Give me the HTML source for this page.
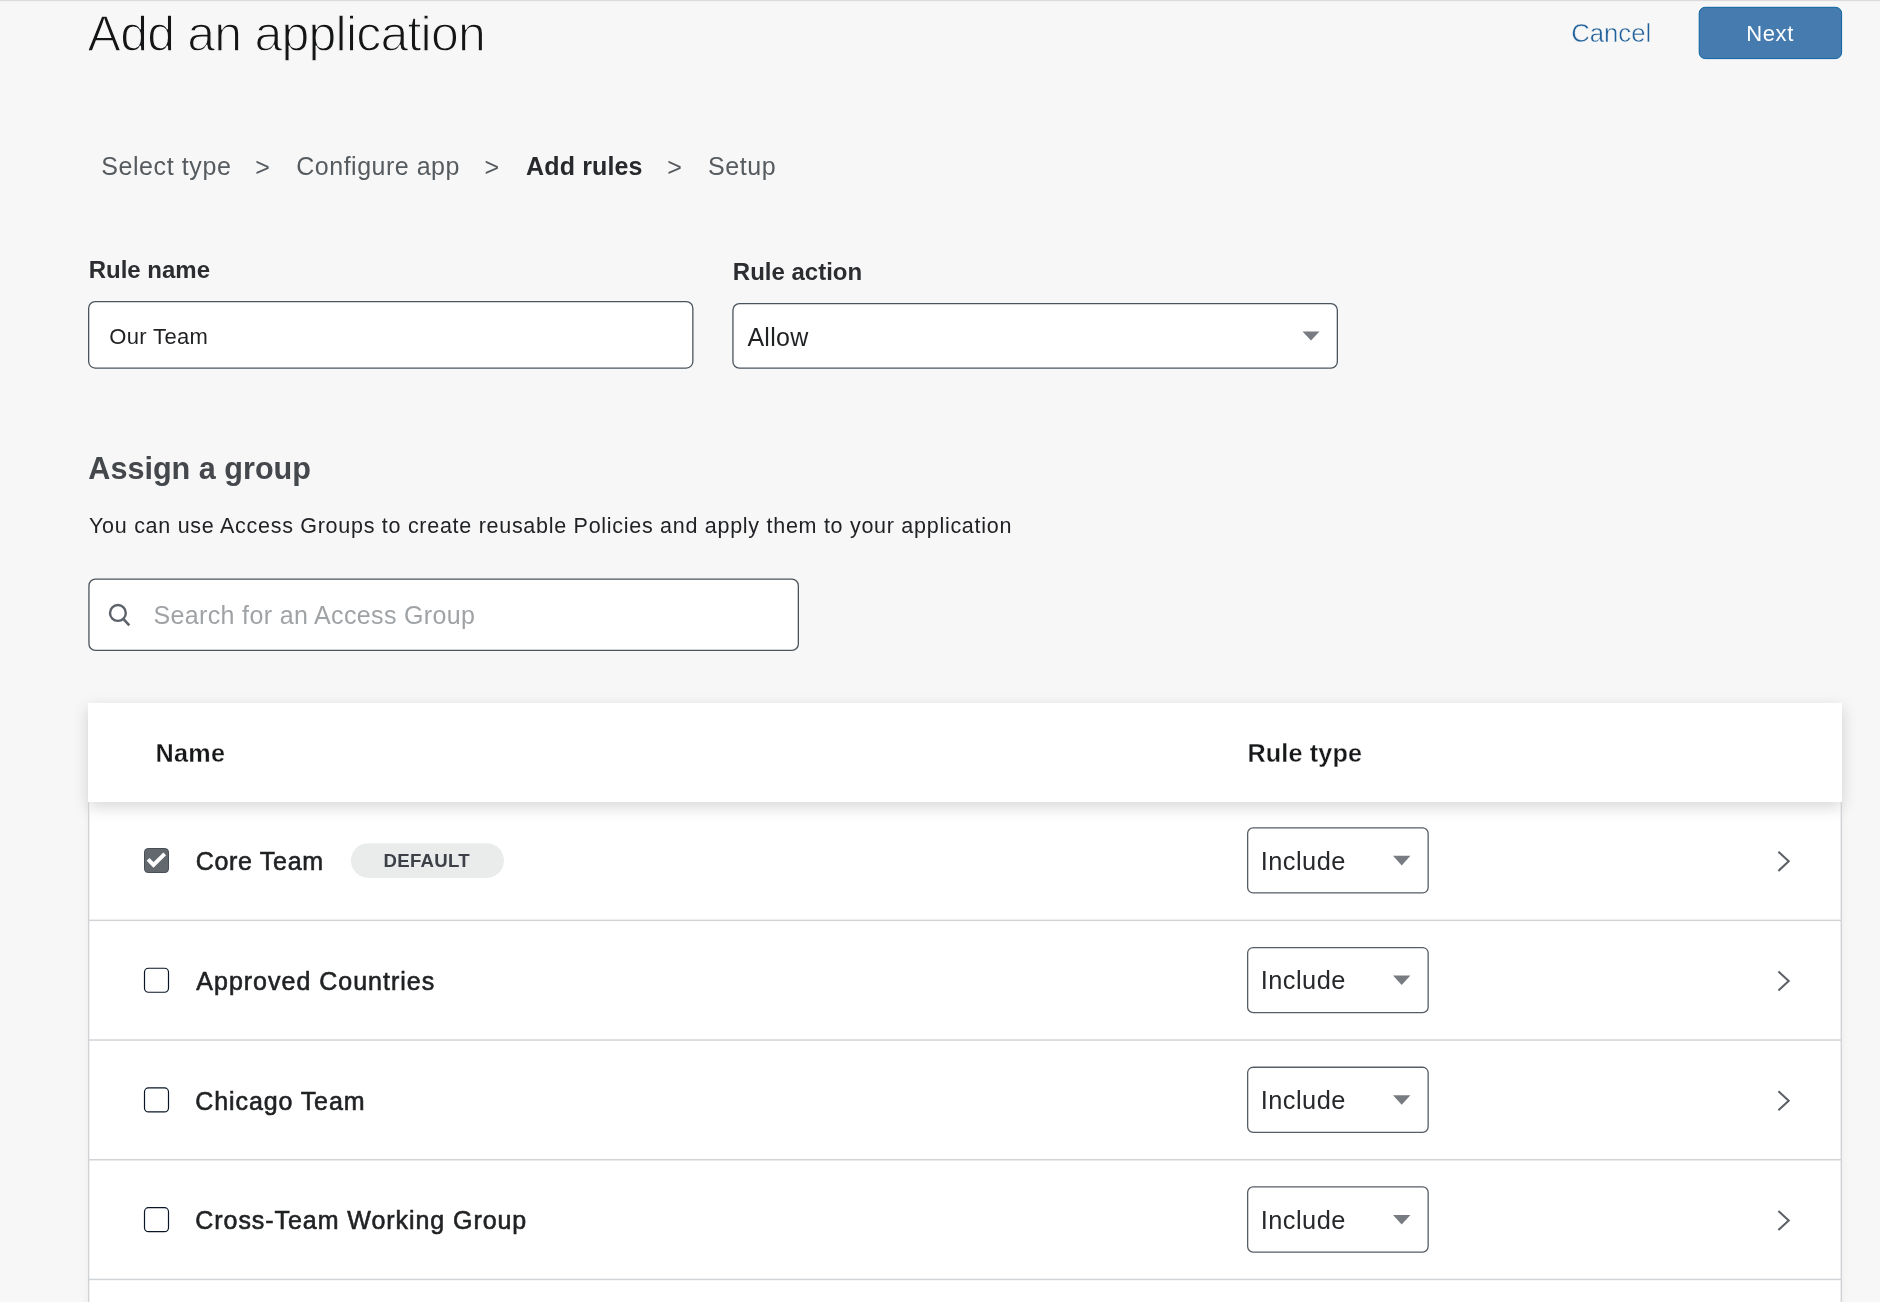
<!DOCTYPE html>
<html lang="en">
<head>
<meta charset="utf-8">
<title>Add an application</title>
<style>
*{box-sizing:border-box;margin:0;padding:0}
html,body{width:1880px;height:1302px;overflow:hidden;background:#f7f7f7}
body{font-family:"Liberation Sans",sans-serif;color:#222;position:relative}
svg.layer{position:absolute;left:0;top:0;width:1880px;height:1302px;display:block}
.txt{position:absolute;left:0;top:0;width:1880px;height:1302px;will-change:transform}
.t{position:absolute;white-space:nowrap;line-height:1;font-weight:normal}
.b{font-weight:bold}
h1.t{font-size:50px;left:87.6px;top:8.6px;color:#141516;-webkit-text-stroke:1.3px #f7f7f7;letter-spacing:-.78px}
.cancel{left:1571.2px;top:21px;font-size:25.7px;color:#20609a;-webkit-text-stroke:.5px #f7f7f7}
.next{left:1746.2px;top:22.6px;font-size:22px;color:#fff;letter-spacing:.65px}
.crumb{font-size:25px;color:#565b60;top:154px}
.crumb.b{color:#27292c}
.lbl{font-size:24px;color:#2b2d30}
h2.t{font-size:30.6px;left:88.3px;top:452.5px;color:#44484c}
.desc{left:89px;top:516px;font-size:21.5px;color:#202225}
.ph{color:#a0a3a6}
.thead{position:absolute;left:88px;top:702.8px;width:1754px;height:99.2px;background:#fff;box-shadow:0 5px 15px rgba(0,0,0,.16)}
.tbody{position:absolute;left:88px;top:802px;width:1754px;height:520px;background:#fff;box-shadow:0 0 8px rgba(0,0,0,.05)}
.th{font-size:25.2px;color:#17181a;top:741px;-webkit-text-stroke:.28px #fff}
.name{font-size:25px;color:#1f2123;-webkit-text-stroke:.6px #1f2123}
.inc{font-size:25.4px;color:#26282b;letter-spacing:.45px}
.badge{left:383.5px;top:851.5px;font-size:18.6px;color:#3d4147;letter-spacing:.3px}
</style>
</head>
<body>
<div class="tbody"></div>
<div class="thead"></div>
<svg class="layer" viewBox="0 0 1880 1302">
<rect x="0" y="0" width="1880" height="1" fill="#dbdbdd"/><rect x="0" y="1" width="1880" height="1" fill="#f3f3f4"/>
<rect x="1699.2" y="7.3" width="142.4" height="51.3" rx="6" fill="#457bae" stroke="#0a63a1" stroke-width="1"/>
<rect x="88.65" y="301.65" width="604.20" height="66.40" rx="6.5" fill="#fff" stroke="#4b545c" stroke-width="1.3"/>
<rect x="732.95" y="303.65" width="604.40" height="64.50" rx="6.5" fill="#fff" stroke="#4b545c" stroke-width="1.3"/>
<rect x="88.95" y="579.15" width="709.40" height="71.30" rx="6.5" fill="#fff" stroke="#4b545c" stroke-width="1.3"/>
<path d="M1302.50 331.50h17.00l-8.50 9.00z" fill="#787c82"/>
<circle cx="117.9" cy="612.95" r="7.9" fill="none" stroke="#5c6269" stroke-width="2.4"/><path d="M123.3 618.8L129.3 625.3" stroke="#5c6269" stroke-width="2.6"/>
<rect x="88" y="802" width="1.3" height="500" fill="#d0d2d5"/>
<rect x="1840.6" y="802" width="1.4" height="500" fill="#d0d2d5"/>
<rect x="88" y="919.60" width="1754" height="1.5" fill="#d1d4d7"/>
<rect x="88" y="1039.30" width="1754" height="1.5" fill="#d1d4d7"/>
<rect x="88" y="1159.00" width="1754" height="1.5" fill="#d1d4d7"/>
<rect x="88" y="1278.70" width="1754" height="1.5" fill="#d1d4d7"/>
<rect x="144.5" y="848.50" width="24" height="24" rx="3.6" fill="#63686d" stroke="#484e55" stroke-width="1"/>
<path d="M148.1 859.30L153.5 864.90L164.7 853.80" fill="none" stroke="#fff" stroke-width="3.9"/>
<rect x="1247.65" y="827.85" width="180.50" height="65.10" rx="5.5" fill="#fff" stroke="#565d64" stroke-width="1.3"/>
<path d="M1393.00 855.80h17.40l-8.70 9.60z" fill="#787c82"/>
<path d="M1778.4 851.80L1788.7 861.30L1778.4 870.90" fill="none" stroke="#5c6066" stroke-width="2.05"/>
<rect x="144.5" y="968.25" width="24" height="24" rx="4" fill="#fff" stroke="#0a1626" stroke-width="1.2"/>
<rect x="1247.65" y="947.55" width="180.50" height="65.10" rx="5.5" fill="#fff" stroke="#565d64" stroke-width="1.3"/>
<path d="M1393.00 975.50h17.40l-8.70 9.60z" fill="#787c82"/>
<path d="M1778.4 971.50L1788.7 981.00L1778.4 990.60" fill="none" stroke="#5c6066" stroke-width="2.05"/>
<rect x="144.5" y="1087.95" width="24" height="24" rx="4" fill="#fff" stroke="#0a1626" stroke-width="1.2"/>
<rect x="1247.65" y="1067.25" width="180.50" height="65.10" rx="5.5" fill="#fff" stroke="#565d64" stroke-width="1.3"/>
<path d="M1393.00 1095.20h17.40l-8.70 9.60z" fill="#787c82"/>
<path d="M1778.4 1091.20L1788.7 1100.70L1778.4 1110.30" fill="none" stroke="#5c6066" stroke-width="2.05"/>
<rect x="144.5" y="1207.65" width="24" height="24" rx="4" fill="#fff" stroke="#0a1626" stroke-width="1.2"/>
<rect x="1247.65" y="1186.95" width="180.50" height="65.10" rx="5.5" fill="#fff" stroke="#565d64" stroke-width="1.3"/>
<path d="M1393.00 1214.90h17.40l-8.70 9.60z" fill="#787c82"/>
<path d="M1778.4 1210.90L1788.7 1220.40L1778.4 1230.00" fill="none" stroke="#5c6066" stroke-width="2.05"/>
<rect x="350.9" y="843.2" width="153.1" height="34.7" rx="17.35" fill="#eaecec"/>
</svg>
<div class="txt">
<h1 class="t">Add an application</h1>
<span class="t cancel">Cancel</span>
<span class="t next">Next</span>

<span class="t crumb" style="left:101.2px;letter-spacing:.6px">Select type</span>
<span class="t crumb" style="left:255.3px;top:155.2px">&gt;</span>
<span class="t crumb" style="left:296.3px;letter-spacing:.5px">Configure app</span>
<span class="t crumb" style="left:484.5px;top:155.2px">&gt;</span>
<span class="t crumb b" style="left:526px;letter-spacing:.15px">Add rules</span>
<span class="t crumb" style="left:667.3px;top:155.2px">&gt;</span>
<span class="t crumb" style="left:708px;letter-spacing:.6px">Setup</span>

<span class="t lbl b" style="left:88.7px;top:258.3px">Rule name</span>
<span class="t" style="left:109.3px;top:325.7px;font-size:22px;letter-spacing:.35px;color:#1f2123">Our Team</span>
<span class="t lbl b" style="left:732.8px;top:260.2px">Rule action</span>
<span class="t" style="left:747.4px;top:324.5px;font-size:25px;letter-spacing:.3px;color:#1f2123">Allow</span>

<h2 class="t b">Assign a group</h2>
<span class="t desc" style="letter-spacing:.72px">You can use Access Groups to create reusable Policies and apply them to your application</span>
<span class="t ph" style="left:153.5px;top:603px;font-size:25px;letter-spacing:.35px">Search for an Access Group</span>

<span class="t th b" style="left:155.4px;letter-spacing:.3px">Name</span>
<span class="t th b" style="left:1247.4px;letter-spacing:.15px">Rule type</span>
<span class="t name" style="left:195.7px;top:849.30px;letter-spacing:0.7px">Core Team</span>
<span class="t inc" style="left:1260.8px;top:848.60px">Include</span>
<span class="t name" style="left:196.3px;top:969.00px;letter-spacing:1.0px">Approved Countries</span>
<span class="t inc" style="left:1260.8px;top:968.30px">Include</span>
<span class="t name" style="left:195.3px;top:1088.70px;letter-spacing:0.9px">Chicago Team</span>
<span class="t inc" style="left:1260.8px;top:1088.00px">Include</span>
<span class="t name" style="left:195.3px;top:1208.40px;letter-spacing:0.94px">Cross-Team Working Group</span>
<span class="t inc" style="left:1260.8px;top:1207.70px">Include</span>
<span class="t badge b">DEFAULT</span>
</div>
</body>
</html>
